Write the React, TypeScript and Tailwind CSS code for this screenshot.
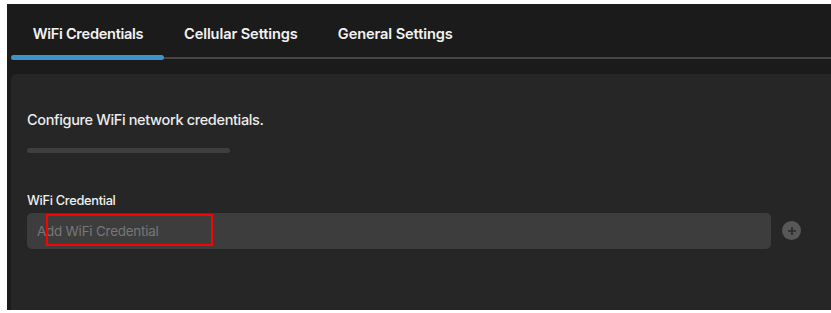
import React, { useState } from "react";

const tabs = ["WiFi Credentials", "Cellular Settings", "General Settings"];

const App: React.FC = () => {
  const [active, setActive] = useState<number>(0);

  return (
    <div className="w-[831px] h-[313px] bg-white pt-[4px] pl-[7px] pb-[3px] font-['Inter',sans-serif]">
      <div className="flex h-full flex-col bg-[#1b1b1b]">
        {/* tabs */}
        <div className="flex h-[51px] items-center pl-[4px] pt-[10px]">
          {tabs.map((tab, i) => (
            <button
              key={tab}
              onClick={() => setActive(i)}
              className={`text-[14.6px] font-semibold tracking-[-0.1px] text-[#f2f2f2] ${
                i === 0 ? "w-[153px] pl-[1px] tracking-[-0.3px]" : i === 1 ? "pl-[20px]" : "pl-[40px]"
              } ${active === i ? "" : ""}`}
            >
              {tab}
            </button>
          ))}
        </div>
        <div className="flex h-[5px] items-center pl-[4px]">
          <div className="h-[5px] w-[153px] rounded-full bg-[#3d94cd]" />
          <div className="h-[2px] flex-1 bg-[#454545]" />
        </div>
        <div className="h-[14px]" />

        {/* panel */}
        <div className="ml-[4px] flex flex-1 flex-col rounded-tl-[5px] bg-[#262626] pl-[16px] pr-[30px]">
          <p className="mt-[35px] text-[14.5px] font-medium tracking-[-0.35px] text-[#ececec]">
            Configure WiFi network credentials.
          </p>
          <div className="mt-[17px] h-[5px] w-[203px] rounded-full bg-[#3f3f3f]" />
          <label className="mt-[38px] text-[12.8px] font-medium tracking-[-0.3px] text-[#f0f0f0]">
            WiFi Credential
          </label>
          <div className="mt-[3px] flex items-center gap-[11px]">
            <div className="relative flex h-[36px] flex-1 items-center rounded-[5px] bg-[#3d3d3d] px-[10px]">
              <input
                placeholder="Add WiFi Credential"
                className="w-full bg-transparent text-[13.4px] tracking-[-0.2px] text-[#bbbbbb] outline-none placeholder:text-[#777777]"
              />
              <div className="pointer-events-none absolute left-[19px] top-[1px] h-[32px] w-[167px] border-2 border-[#ff0000]" />
            </div>
            <button className="flex h-[19px] w-[19px] items-center justify-center rounded-full bg-[#575757]">
              <svg width="10" height="10" viewBox="0 0 10 10">
                <path d="M5 1v8M1 5h8" stroke="#2a2a2a" strokeWidth="1.6" />
              </svg>
            </button>
          </div>
        </div>
      </div>
    </div>
  );
};

export default App;
